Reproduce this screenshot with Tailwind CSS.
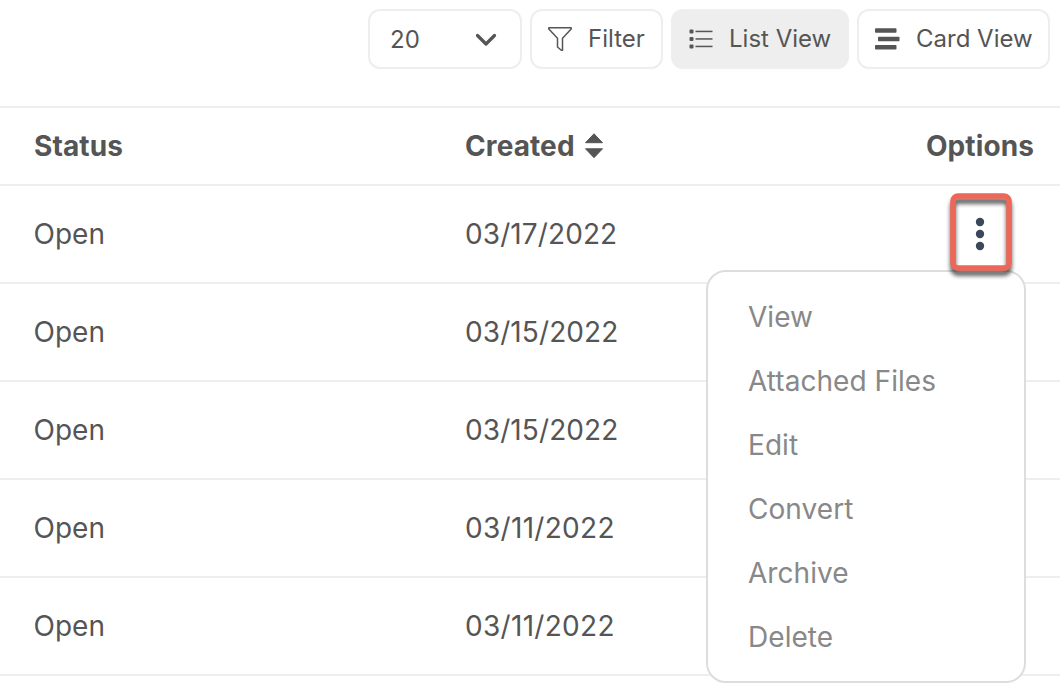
<!DOCTYPE html>
<html lang="en">
<head>
  <meta charset="UTF-8" />
  <meta name="viewport" content="width=device-width, initial-scale=1.0"/>
  <title>List View</title>
  <script src="https://cdn.jsdelivr.net/npm/@tailwindcss/browser@4"></script>
</head>
<body class="bg-white font-['Inter',sans-serif] text-[#555] h-screen overflow-hidden">

  <!-- Toolbar -->
  <div class="flex justify-end gap-2 pt-[9px] pr-2.5 h-[106px] text-2xl">
    <button class="flex items-center justify-between w-[154px] h-[60px] pl-5 pr-[23px] pt-0.5 border-2 border-[#eee] rounded-xl">
      <span>20</span>
      <svg class="w-[22px] h-[14px]" viewBox="0 0 22 14" fill="none" stroke="#555" stroke-width="3.2" stroke-linecap="round" stroke-linejoin="round">
        <path d="M2.500 2.500L11 11l8.500-8.500" />
      </svg>
    </button>
    <button class="flex items-center w-[133px] h-[60px] pl-4 border-2 border-[#eee] rounded-xl">
      <svg class="w-6 h-6 mr-4" viewBox="0 0 24 24" fill="none" stroke="#555" stroke-width="1.500" stroke-linejoin="round">
        <path d="M.8.8h22.400v1.200l-8.700 9.200v12h-1.200l-3.800-3.200v-8.800L.8 2z" />
      </svg>
      <span>Filter</span>
    </button>
    <button class="flex items-center w-[178px] h-[60px] pl-[18px] bg-[#eee] rounded-xl">
      <svg class="w-6 h-5 mr-4" viewBox="0 0 24 20" fill="#555">
        <rect x="0.500" y="0.500" width="4" height="4" rx="1" />
        <rect x="0.500" y="8" width="4" height="4" rx="1" />
        <rect x="0.500" y="15.500" width="4" height="4" rx="1" />
        <rect x="6.500" y="1.700" width="17" height="1.500" />
        <rect x="6.500" y="9.200" width="17" height="1.500" />
        <rect x="6.500" y="16.700" width="17" height="1.500" />
      </svg>
      <span>List View</span>
    </button>
    <button class="flex items-center w-[193px] h-[60px] pl-4 border-2 border-[#eee] rounded-xl">
      <svg class="w-[25px] h-[22px] mr-4" viewBox="0 0 25 22" fill="#555">
        <rect x="0" y="0.300" width="21.500" height="4.500" rx=".8" />
        <rect x="3" y="8.700" width="21.500" height="4.500" rx=".8" />
        <rect x="0" y="17" width="21.500" height="4.500" rx=".8" />
      </svg>
      <span>Card View</span>
    </button>
  </div>

  <!-- Table -->
  <div class="border-t-2 border-[#eee] text-[28px]">
    <div class="flex items-center h-[78px] pl-[34px] pr-[26px] border-b-2 border-[#eee] font-bold tracking-[0.1px]">
      <div class="w-[431px]">Status</div>
      <div class="flex items-center flex-1">
        <span>Created</span>
        <svg class="w-5 h-[25px] ml-[9px] -mt-px" viewBox="0 0 20 25" fill="#555" stroke="#555" stroke-linejoin="round">
          <path d="M10 .8L18.500 9.700h-17z" />
          <path d="M10 24.700L18.500 15.800h-17z" />
        </svg>
      </div>
      <div>Options</div>
    </div>

    <div class="relative flex items-center h-[98px] pl-[33.500px] pr-12 border-b-2 border-[#eee]">
      <div class="w-[431.500px]">Open</div>
      <div class="flex-1 tracking-[0.1px]">03/17/2022</div>
      <button class="flex items-center justify-center w-[62px] h-[78px] -mt-1 z-20">
        <svg class="w-[62px] h-[78px] overflow-visible" viewBox="0 0 62 78">
          <g fill="#3b4859">
            <circle cx="30" cy="29" r="4.200" />
            <circle cx="30" cy="41" r="4.200" />
            <circle cx="30" cy="53" r="4.200" />
          </g>
          <rect class="drop-shadow-[0_5px_2px_rgba(0,0,0,0.65)]" x="3" y="3" width="56" height="72" rx="5" fill="none" stroke="#ed6657" stroke-width="5.500" />
        </svg>
      </button>

      <!-- Options menu -->
      <div class="absolute top-[84px] right-[34px] z-10 w-[320px] h-[413px] pt-[13px] pl-10 bg-white border-2 border-[#ddd] rounded-[20px] text-[#888] tracking-[0.05px]">
        <a href="#" class="block h-16 leading-[64px]">View</a>
        <a href="#" class="block h-16 leading-[64px]">Attached Files</a>
        <a href="#" class="block h-16 leading-[64px]">Edit</a>
        <a href="#" class="block h-16 leading-[64px]">Convert</a>
        <a href="#" class="block h-16 leading-[64px]">Archive</a>
        <a href="#" class="block h-16 leading-[64px]">Delete</a>
      </div>
    </div>

    <div class="flex items-center h-[98px] pl-[33.500px] border-b-2 border-[#eee]">
      <div class="w-[431.500px]">Open</div>
      <div class="tracking-[0.1px]">03/15/2022</div>
    </div>
    <div class="flex items-center h-[98px] pl-[33.500px] border-b-2 border-[#eee]">
      <div class="w-[431.500px]">Open</div>
      <div class="tracking-[0.1px]">03/15/2022</div>
    </div>
    <div class="flex items-center h-[98px] pl-[33.500px] border-b-2 border-[#eee]">
      <div class="w-[431.500px]">Open</div>
      <div class="tracking-[0.3px]">03/11/2022</div>
    </div>
    <div class="flex items-center h-[98px] pl-[33.500px] border-b-2 border-[#eee]">
      <div class="w-[431.500px]">Open</div>
      <div class="tracking-[0.3px]">03/11/2022</div>
    </div>
  </div>

</body>
</html>
